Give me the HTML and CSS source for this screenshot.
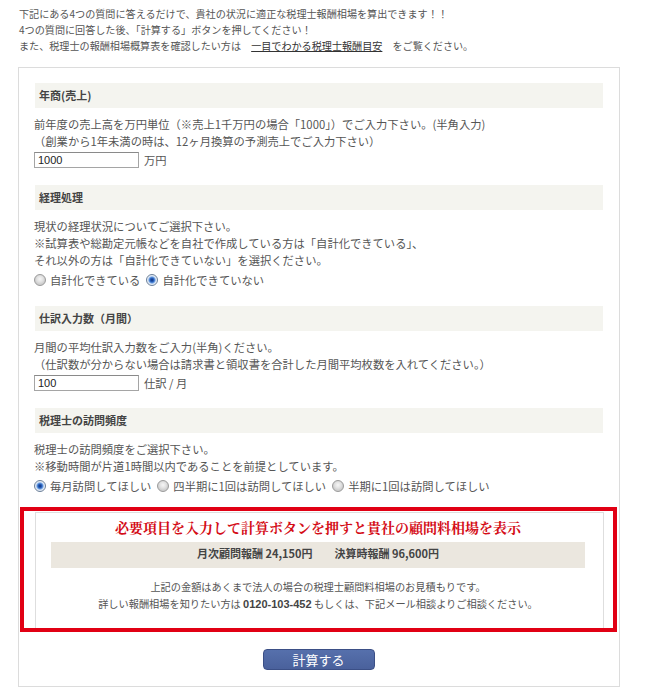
FILE: index.html
```html
<!DOCTYPE html>
<html lang="ja">
<head>
<meta charset="utf-8">
<title>税理士報酬相場シミュレーション</title>
<link rel="stylesheet" href="styles.css">
</head>
<body>
<div class="page">
  <div class="intro">
    <p>下記にある4つの質問に答えるだけで、貴社の状況に適正な税理士報酬相場を算出できます！！</p>
    <p>4つの質問に回答した後、「計算する」ボタンを押してください！</p>
    <p>また、税理士の報酬相場概算表を確認したい方は　<a class="intro-link" href="#">一目でわかる税理士報酬目安</a>　をご覧ください。</p>
  </div>

  <div class="calc">
    <section class="q">
      <h2 class="q-title">年商(売上)</h2>
      <div class="q-body">
        <p>前年度の売上高を万円単位（※売上1千万円の場合「1000」）でご入力下さい。(半角入力)</p>
        <p>（創業から1年未満の時は、12ヶ月換算の予測売上でご入力下さい）</p>
        <div class="ctrl"><input class="num" type="text" value="1000"><span class="unit">万円</span></div>
      </div>
    </section>

    <section class="q">
      <h2 class="q-title">経理処理</h2>
      <div class="q-body">
        <p>現状の経理状況についてご選択下さい。</p>
        <p>※試算表や総勘定元帳などを自社で作成している方は「自計化できている」、</p>
        <p>それ以外の方は「自計化できていない」を選択ください。</p>
        <div class="ctrl radios">
          <label class="opt"><input class="radio" type="radio" name="keiri">自計化できている</label>
          <label class="opt"><input class="radio" type="radio" name="keiri" checked>自計化できていない</label>
        </div>
      </div>
    </section>

    <section class="q">
      <h2 class="q-title">仕訳入力数（月間）</h2>
      <div class="q-body">
        <p>月間の平均仕訳入力数をご入力(半角)ください。</p>
        <p>（仕訳数が分からない場合は請求書と領収書を合計した月間平均枚数を入れてください。）</p>
        <div class="ctrl"><input class="num" type="text" value="100"><span class="unit">仕訳 / 月</span></div>
      </div>
    </section>

    <section class="q">
      <h2 class="q-title">税理士の訪問頻度</h2>
      <div class="q-body">
        <p>税理士の訪問頻度をご選択下さい。</p>
        <p>※移動時間が片道1時間以内であることを前提としています。</p>
        <div class="ctrl radios">
          <label class="opt"><input class="radio" type="radio" name="houmon" checked>毎月訪問してほしい</label>
          <label class="opt"><input class="radio" type="radio" name="houmon">四半期に1回は訪問してほしい</label>
          <label class="opt"><input class="radio" type="radio" name="houmon">半期に1回は訪問してほしい</label>
        </div>
      </div>
    </section>

    <div class="result">
      <div class="result-inner">
        <p class="result-title">必要項目を入力して計算ボタンを押すと貴社の顧問料相場を表示</p>
        <p class="result-fee">月次顧問報酬 24,150円　　決算時報酬 96,600円</p>
        <p class="result-note">上記の金額はあくまで法人の場合の税理士顧問料相場のお見積もりです。</p>
        <p class="result-note">詳しい報酬相場を知りたい方は <b>0120-103-452</b> もしくは、下記メール相談よりご相談ください。</p>
      </div>
    </div>

    <div class="actions">
      <button class="calc-btn" type="button">計算する</button>
    </div>
  </div>
</div>
</body>
</html>
```

FILE: styles.css
```css
* {
  box-sizing: border-box;
}

html, body {
  margin: 0;
  padding: 0;
  background: #fff;
}

body {
  font-family: "Noto Sans CJK JP", "Noto Sans", sans-serif;
  color: #555;
}

p {
  margin: 0;
}

.page {
  width: 648px;
  padding: 6px 0 0 18px;
}

.intro {
  font-size: 10.1px;
  line-height: 16px;
  color: #555;
  padding-left: 1px;
}

.intro-link {
  color: #333;
  text-decoration: underline;
}

.calc {
  margin-top: 13px;
  width: 602px;
  border: 1px solid #dcdcdc;
  padding: 15px 16px 16px 15px;
}

.q + .q {
  margin-top: 15px;
}

.q-title {
  margin: 0 0 0 1px;
  height: 25px;
  line-height: 25px;
  padding-left: 4px;
  background: #f4f4ef;
  font-size: 11px;
  font-weight: bold;
  color: #444;
}

.q-body {
  padding-top: 8px;
  font-size: 11.3px;
  line-height: 17px;
}

.ctrl {
  height: 20px;
  display: flex;
  align-items: center;
}

.ctrl.radios {
  height: 22px;
}

.num {
  width: 105px;
  height: 16px;
  margin: 0;
  padding: 0 3px;
  border: 1px solid #a5a5a5;
  border-top-color: #8a8a8a;
  font-family: "Liberation Sans", Arial, sans-serif;
  font-size: 11px;
  color: #222;
  line-height: 14px;
}

.unit {
  margin-left: 5px;
}

.opt {
  display: flex;
  align-items: center;
  margin-right: 6px;
}

.radio {
  appearance: none;
  -webkit-appearance: none;
  width: 12px;
  height: 12px;
  margin: 0 4px 0 0;
  border-radius: 50%;
  border: 1px solid #9a9a9a;
  background: radial-gradient(circle at 50% 40%, #f6f6f6 0, #e2e2e2 3px, #cfcfcf 5px);
}

.radio:checked {
  border-color: #6b7f98;
  background: radial-gradient(circle, #0f2f7a 0, #2a64c0 2px, #6d9ee0 3px, #d5e3f5 4px, #eef2f7 5px);
}

.result {
  margin: 10px -14px 0 -14px;
  border: 4px solid #e10014;
  padding: 1px 9px 0 11px;
}

.result-inner {
  border: 1px solid #dedede;
  border-bottom: none;
  padding: 3px 18px 15px 15px;
  text-align: center;
}

.result-title {
  font-family: "Noto Serif CJK JP", "Noto Sans CJK JP", serif;
  font-size: 14px;
  font-weight: bold;
  line-height: 22px;
  color: #d40c16;
}

.result-fee {
  margin-top: 4px;
  height: 26px;
  line-height: 23px;
  background: #ebe7df;
  font-size: 11px;
  font-weight: bold;
  color: #444;
}

.result-note {
  font-size: 10.2px;
  line-height: 17px;
  color: #555;
}

.result-fee + .result-note {
  margin-top: 10px;
}

.result-note b {
  font-family: "Liberation Sans", Arial, sans-serif;
  font-size: 11px;
  color: #444;
}

.actions {
  margin-top: 17px;
  display: flex;
  justify-content: center;
}

.calc-btn {
  width: 112px;
  height: 21px;
  padding: 0;
  border: 1px solid #3b4f86;
  border-radius: 4px;
  background: linear-gradient(#5670ac, #4a619c);
  color: #fff;
  font-family: "Noto Sans CJK JP", sans-serif;
  font-size: 13px;
  line-height: 19px;
}
```
